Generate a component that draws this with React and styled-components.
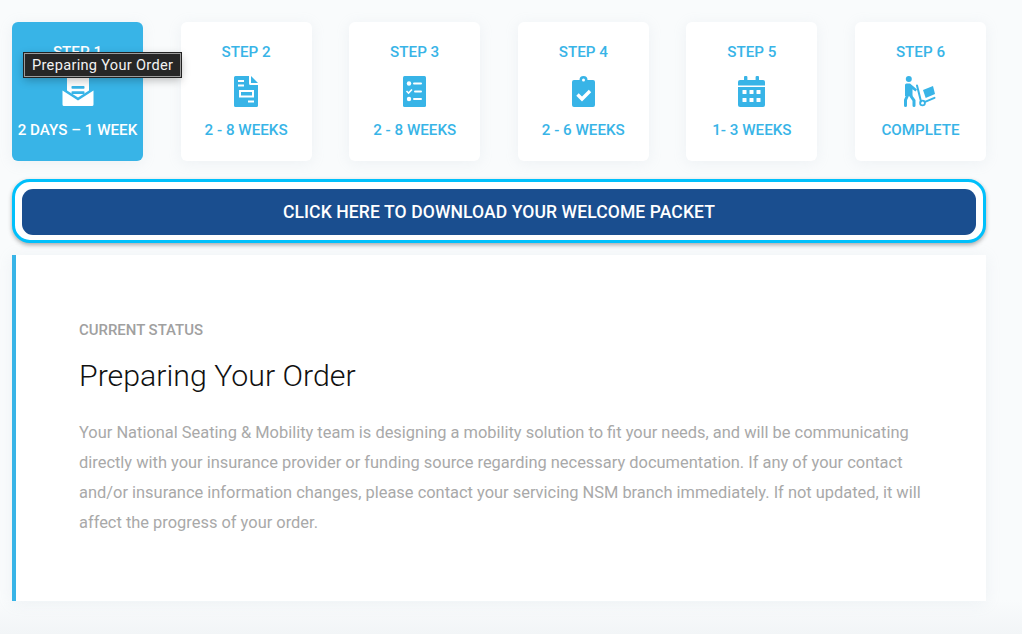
import styled, { createGlobalStyle } from 'styled-components';

const GlobalStyle = createGlobalStyle`
    html, body {
        margin: 0;
        padding: 0;
        background: #f9fbfc;
        font-family: Roboto, "Liberation Sans", sans-serif;
    }
`;

const Page = styled.div`
    position: relative;
    width: 1022px;
    height: 634px;
    box-sizing: border-box;
    padding: 22px 36px 0 12px;
    overflow: hidden;
    background: linear-gradient(to bottom, #f9fbfc 0, #f9fbfc 600px, #f2f5f7 634px);
`;

const Steps = styled.div`
    display: flex;
    justify-content: space-between;
`;

const StepCard = styled.div`
    width: 131px;
    height: 139px;
    box-sizing: border-box;
    padding-top: 22px;
    border-radius: 6px;
    display: flex;
    flex-direction: column;
    align-items: center;
    font-size: 15.2px;
    line-height: 17px;
    font-weight: 500;
    white-space: nowrap;
    color: ${(p) => (p.$active ? '#ffffff' : '#38b4e7')};
    background: ${(p) => (p.$active ? '#38b4e7' : '#ffffff')};
    box-shadow: 0 2px 14px rgba(170, 185, 200, 0.14);
`;

const StepIcon = styled.div`
    height: 34px;
    margin: 13px 0 14px;
    display: flex;
    align-items: center;
    justify-content: center;
`;

const Tooltip = styled.div`
    position: absolute;
    left: 24px;
    top: 53px;
    height: 24px;
    box-sizing: border-box;
    padding: 0 7px;
    display: flex;
    align-items: center;
    background: #262626;
    border: 1px solid #9c9c9c;
    outline: 1px solid #222;
    color: #f2f2f2;
    font-size: 14.6px;
    letter-spacing: 0.3px;
    white-space: nowrap;
    box-shadow: 0 3px 10px rgba(0, 0, 0, 0.28);
`;

const DownloadRing = styled.div`
    margin-top: 18px;
    width: 974px;
    height: 64px;
    box-sizing: border-box;
    padding: 7px 7px 5px;
    border: 3px solid #00c0fb;
    border-radius: 18px;
    background: #ffffff;
    box-shadow: 0 2px 4px rgba(70, 70, 70, 0.45);
`;

const DownloadButton = styled.div`
    height: 100%;
    border-radius: 11px;
    background: #1a4e8f;
    color: #ffffff;
    display: flex;
    align-items: center;
    justify-content: center;
    font-size: 17.55px;
    font-weight: 500;
    letter-spacing: 0.1px;
`;

const StatusPanel = styled.section`
    margin-top: 12px;
    width: 974px;
    height: 346px;
    box-sizing: border-box;
    border-left: 4px solid #38b4e7;
    background: #ffffff;
    padding: 67px 56px 0 63px;
    box-shadow: 0 2px 14px rgba(170, 185, 200, 0.14);
`;

const StatusLabel = styled.div`
    font-size: 14.95px;
    line-height: 17px;
    font-weight: 500;
    color: #a0a0a0;
`;

const StatusTitle = styled.h1`
    margin: 18px 0 0;
    font-size: 30.3px;
    line-height: 37px;
    font-weight: 300;
    color: #111111;
`;

const StatusText = styled.p`
    margin: 24px 0 0;
    font-size: 16.43px;
    line-height: 30px;
    font-weight: 400;
    color: #a9a9a9;
`;

const Icon = ({ width = 28, height = 34, viewBox, children }) => (
    <svg width={width} height={height} viewBox={viewBox} fill="#38b4e7">
        {children}
    </svg>
);

const EnvelopeIcon = () => (
    <Icon width={32} height={32} viewBox="0 0 32 32">
        <path fill="#fff" d="M6 1h20a1 1 0 0 1 1 1v13.500L16 22.500 5 15.500V2a1 1 0 0 1 1-1z" />
        <path fill="#fff" d="M0.500 15.500L16 25.500l15.500-10V29.500a1.500 1.500 0 0 1-1.500 1.500H2a1.500 1.500 0 0 1-1.500-1.500z" />
        <rect x="9.500" y="11" width="13" height="2.700" rx="0.800" fill="#38b4e7" />
        <rect x="9.500" y="16.300" width="13" height="2.700" rx="0.800" fill="#38b4e7" />
    </Icon>
);

const FormIcon = () => (
    <Icon width={24} height={31} viewBox="0 0 24 31">
        <path d="M1.500 0H15v7.500a1.500 1.500 0 0 0 1.500 1.500H24v20.500a1.500 1.500 0 0 1-1.500 1.500h-21A1.500 1.500 0 0 1 0 29.500v-28A1.500 1.500 0 0 1 1.500 0z" />
        <path d="M17 0l7 7h-7z" />
        <g fill="#fff">
            <rect x="4" y="4" width="6" height="2" />
            <rect x="4" y="8.500" width="6" height="2" />
            <path d="M5 14h15v7.500H5zm2 2v3.500h11V16z" />
            <rect x="14" y="24.500" width="6" height="2" />
        </g>
    </Icon>
);

const ChecklistIcon = () => (
    <Icon width={23} height={31} viewBox="0 0 23 31">
        <rect width="23" height="31" rx="1.500" />
        <g fill="#fff">
            <circle cx="6" cy="7.500" r="2.200" />
            <rect x="10" y="6.500" width="9" height="2" rx="1" />
            <rect x="11" y="14.500" width="8" height="2" rx="1" />
            <circle cx="6" cy="23" r="2.200" />
            <rect x="10" y="22" width="9" height="2" rx="1" />
        </g>
        <path d="M3.500 15l2 2 3.500-3.500" fill="none" stroke="#fff" strokeWidth="1.600" />
    </Icon>
);

const ClipboardIcon = () => (
    <Icon width={23} height={31} viewBox="0 0 23 31">
        <path d="M2 4h5.500a4 4 0 0 1 8 0H21a2 2 0 0 1 2 2v23a2 2 0 0 1-2 2H2a2 2 0 0 1-2-2V6a2 2 0 0 1 2-2z" />
        <circle cx="11.500" cy="4" r="1.500" fill="#fff" />
        <path d="M5.500 18.500l4.500 4.500 8-8" fill="none" stroke="#fff" strokeWidth="3.400" />
    </Icon>
);

const CalendarIcon = () => (
    <Icon width={27} height={31} viewBox="0 0 27 31">
        <rect x="6" y="0" width="3.400" height="7" rx="1" />
        <rect x="17.600" y="0" width="3.400" height="7" rx="1" />
        <path d="M2 4h23a2 2 0 0 1 2 2v3.500H0V6a2 2 0 0 1 2-2z" />
        <path d="M0 11h27v18a2 2 0 0 1-2 2H2a2 2 0 0 1-2-2z" />
        <g fill="#fff">
            {[14, 22].map((y) =>
                [4.500, 11.500, 18.500].map((x) => (
                    <rect key={`${x}-${y}`} x={x} y={y} width="4" height="4" rx="0.500" />
                ))
            )}
        </g>
    </Icon>
);

const MoverIcon = () => (
    <Icon width={32} height={31} viewBox="0 0 32 31">
        <circle cx="4.800" cy="3" r="3" />
        <path d="M2.500 7.500h3.500l3 2.500 4 3.500-1.500 2-3-2.200V20H1V9a1.500 1.500 0 0 1 1.500-1.500z" />
        <g fill="none" stroke="#38b4e7" strokeLinecap="round">
            <path d="M3.500 19.500L1.500 24v5.500" strokeWidth="3" />
            <path d="M6.500 19.500l3.500 5v5" strokeWidth="3" />
            <path d="M13 9.500l4 16" strokeWidth="2" />
            <circle cx="18.500" cy="27" r="2.400" strokeWidth="1.800" />
            <path d="M21 25.800l9.500-4" strokeWidth="2" />
        </g>
        <path d="M19 14l10-4 2 8-9.300 4z" />
    </Icon>
);

const steps = [
    { title: 'STEP 1', time: '2 DAYS – 1 WEEK', icon: <EnvelopeIcon />, active: true },
    { title: 'STEP 2', time: '2 - 8 WEEKS', icon: <FormIcon /> },
    { title: 'STEP 3', time: '2 - 8 WEEKS', icon: <ChecklistIcon /> },
    { title: 'STEP 4', time: '2 - 6 WEEKS', icon: <ClipboardIcon /> },
    { title: 'STEP 5', time: '1- 3 WEEKS', icon: <CalendarIcon /> },
    { title: 'STEP 6', time: 'COMPLETE', icon: <MoverIcon /> },
];

const App = () => {
    return (
        <Page>
            <GlobalStyle />
            <Steps>
                {steps.map((step) => (
                    <StepCard key={step.title} $active={step.active}>
                        <div>{step.title}</div>
                        <StepIcon>{step.icon}</StepIcon>
                        <div>{step.time}</div>
                    </StepCard>
                ))}
            </Steps>
            <Tooltip>Preparing Your Order</Tooltip>
            <DownloadRing>
                <DownloadButton>CLICK HERE TO DOWNLOAD YOUR WELCOME PACKET</DownloadButton>
            </DownloadRing>
            <StatusPanel>
                <StatusLabel>CURRENT STATUS</StatusLabel>
                <StatusTitle>Preparing Your Order</StatusTitle>
                <StatusText>
                    Your National Seating &amp; Mobility team is designing a mobility solution to fit your needs, and will be communicating directly with your insurance provider or funding source regarding necessary documentation. If any of your contact and/or insurance information changes, please contact your servicing NSM branch immediately. If not updated, it will affect the progress of your order.
                </StatusText>
            </StatusPanel>
        </Page>
    );
};

export default App;
